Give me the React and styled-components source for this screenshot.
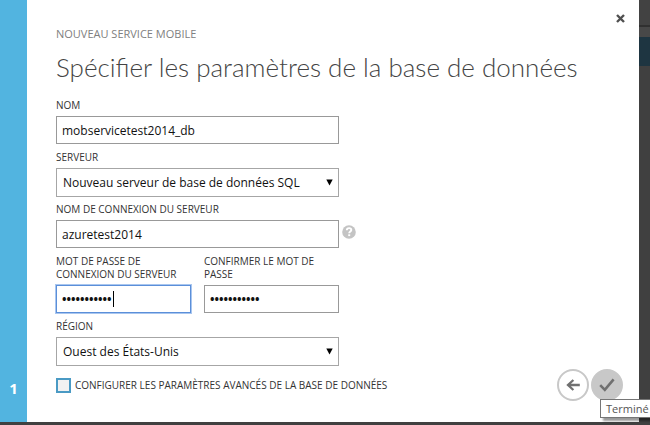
import React, { useState } from "react";
import styled, { createGlobalStyle } from "styled-components";

const GlobalStyle = createGlobalStyle`
  *, *::before, *::after {
    box-sizing: border-box;
  }

  body {
    margin: 0;
    background: #404040;
    font-family: "Open Sans", "Noto Sans", sans-serif;
    color: #333;
  }

  button, input, select {
    font-family: inherit;
    margin: 0;
  }
`;

const Page = styled.div`
  display: grid;
  grid-template-columns: 1fr 11px;
  min-height: 100vh;
  padding-bottom: 3px;
  overflow: hidden;
`;

const Dialog = styled.section`
  display: flex;
  background: #fff;
`;

const Behind = styled.div`
  display: flex;
  flex-direction: column;
`;

const BehindBand = styled.div`
  height: ${(props) => props.$height}px;
  background: ${(props) => props.$color};
`;

const StepRail = styled.aside`
  flex: 0 0 27px;
  display: flex;
  align-items: flex-end;
  justify-content: center;
  padding-bottom: 24px;
  background: #52b4e0;
  color: #fff;
  font-size: 15px;
  font-weight: 700;
  line-height: 20px;
`;

const Content = styled.form`
  flex: 1;
  display: flex;
  flex-direction: column;
  padding: 12px 12px 19px 29px;
`;

const Header = styled.header`
  display: flex;
  justify-content: space-between;
  align-items: flex-start;
`;

const Category = styled.p`
  margin: 14px 0 0;
  color: #808080;
  font-size: 11px;
  line-height: 16px;
`;

const CloseButton = styled.button`
  display: flex;
  padding: 2px;
  border: 0;
  background: none;
  color: #505050;
`;

const Title = styled.h1`
  margin: 7px 0 14px;
  color: #444;
  font-family: Lato, "Open Sans", sans-serif;
  font-size: 26px;
  font-weight: 300;
  line-height: 36px;
`;

const Fields = styled.div`
  display: flex;
  flex-direction: column;
  gap: 7px;
`;

const Field = styled.div`
  display: flex;
  flex-direction: column;
  gap: 4px;
`;

const Label = styled.label`
  font-size: 10px;
  line-height: 13px;
`;

const Row = styled.div`
  display: flex;
  gap: 3px;
`;

const Pair = styled.div`
  display: grid;
  grid-template-columns: 1fr 1fr;
  gap: 13px;
  max-width: 283px;
`;

const InputWrap = styled.div`
  position: relative;
  width: 100%;
  max-width: 283px;
`;

const Input = styled.input`
  display: block;
  width: 100%;
  height: 28px;
  padding: 0 5px;
  border: 1px solid #999;
  background: #fff;
  color: #111;
  font-size: 12px;
  outline: none;

  &[type="password"] {
    font-weight: 700;
  }

  &:focus {
    border-color: #5b8fd9;
    box-shadow: 0 0 0 1px #a9c6ef;
    caret-color: transparent;
  }
`;

const Caret = styled.span`
  position: absolute;
  top: 6px;
  left: 57px;
  width: 1px;
  height: 16px;
  background: #000;
`;

const Select = styled.select`
  display: block;
  width: 100%;
  height: 29px;
  margin-bottom: -1px;
  padding: 0 24px 0 6px;
  border: 1px solid #a6a6a6;
  border-radius: 0;
  background: #fff;
  color: #111;
  font-size: 12px;
  appearance: none;
`;

const SelectArrow = styled.svg`
  position: absolute;
  top: 11px;
  right: 6px;
  pointer-events: none;
`;

const HelpButton = styled.button`
  display: flex;
  align-self: flex-start;
  padding: 5px 0;
  border: 0;
  background: none;
`;

const Footer = styled.footer`
  display: flex;
  align-items: center;
  justify-content: space-between;
  margin-top: 4px;
`;

const CheckLabel = styled.label`
  display: flex;
  align-items: center;
  gap: 4px;
  font-size: 10px;
  line-height: 16px;
`;

const Checkbox = styled.input`
  width: 15px;
  height: 15px;
  border: 2px solid #4a9ac4;
  background: #f2f2f2;
  appearance: none;
`;

const Actions = styled.div`
  display: flex;
  gap: 2px;
  margin-right: 4px;
`;

const ActionWrap = styled.div`
  position: relative;
`;

const RoundButton = styled.button`
  display: flex;
  align-items: center;
  justify-content: center;
  width: 32px;
  height: 32px;
  padding: 0;
  border: 2px solid #c8c8c8;
  border-radius: 50%;
  background: ${(props) => (props.$filled ? "#c8c8c8" : "#fff")};
  color: #707070;
`;

const Tooltip = styled.span`
  position: absolute;
  top: 30px;
  left: 9px;
  padding: 0 5px;
  border: 1px solid #767676;
  background: #fff;
  box-shadow: 3px 3px 2px rgba(0, 0, 0, 0.4);
  color: #555;
  font-size: 11px;
  line-height: 17px;
`;

function TextField({ id, label, type = "text", defaultValue, help, focused }) {
  const [active, setActive] = useState(Boolean(focused));
  const [value, setValue] = useState(defaultValue);

  return (
    <Field>
      <Label htmlFor={id}>{label}</Label>
      <Row>
        <InputWrap>
          <Input
            id={id}
            type={type}
            value={value}
            autoFocus={focused}
            autoComplete="off"
            spellCheck={false}
            onChange={(e) => setValue(e.target.value)}
            onFocus={() => setActive(true)}
            onBlur={() => setActive(false)}
          />
          {focused && active && <Caret />}
        </InputWrap>
        {help && (
          <HelpButton type="button" aria-label="Aide">
            <svg width="14" height="14" viewBox="0 0 14 14" fill="none">
              <circle cx="7" cy="7" r="6.8" fill="#c4c4c4" />
              <path d="M4.8 5.2C4.8 3.8 5.8 3.1 7.1 3.1s2.2.7 2.2 1.8c0 1.5-2.1 1.6-2.1 3.3" stroke="#fff" strokeWidth="1.9" />
              <path d="M6.2 9.3h2v1.8h-2z" fill="#fff" />
            </svg>
          </HelpButton>
        )}
      </Row>
    </Field>
  );
}

function SelectField({ id, label, option }) {
  return (
    <Field>
      <Label htmlFor={id}>{label}</Label>
      <InputWrap>
        <Select id={id}>
          <option>{option}</option>
        </Select>
        <SelectArrow width="7" height="7" viewBox="0 0 7 7">
          <path d="M0.3 0.5h6.4L3.5 6.5z" fill="#000" />
        </SelectArrow>
      </InputWrap>
    </Field>
  );
}

function App() {
  return (
    <Page>
      <GlobalStyle />
      <Dialog>
        <StepRail>1</StepRail>
        <Content onSubmit={(e) => e.preventDefault()}>
          <Header>
            <Category>NOUVEAU SERVICE MOBILE</Category>
            <CloseButton type="button" aria-label="Fermer">
              <svg width="9" height="9" viewBox="0 0 9 9" fill="none" stroke="currentColor" strokeWidth="2.4">
                <path d="M1 1l7 7M8 1L1 8" />
              </svg>
            </CloseButton>
          </Header>
          <Title>Spécifier les paramètres de la base de données</Title>

          <Fields>
            <TextField id="name" label="NOM" defaultValue="mobservicetest2014_db" />
            <SelectField id="server" label="SERVEUR" option="Nouveau serveur de base de données SQL" />
            <TextField id="login" label="NOM DE CONNEXION DU SERVEUR" defaultValue="azuretest2014" help />
            <Pair>
              <TextField
                id="password"
                label="MOT DE PASSE DE CONNEXION DU SERVEUR"
                type="password"
                defaultValue="motdepasse1"
                focused
              />
              <TextField id="confirm" label="CONFIRMER LE MOT DE PASSE" type="password" defaultValue="motdepasse1" />
            </Pair>
            <SelectField id="region" label="RÉGION" option="Ouest des États-Unis" />
          </Fields>

          <Footer>
            <CheckLabel>
              <Checkbox type="checkbox" />
              CONFIGURER LES PARAMÈTRES AVANCÉS DE LA BASE DE DONNÉES
            </CheckLabel>
            <Actions>
              <RoundButton type="button" aria-label="Retour">
                <svg width="14" height="12" viewBox="0 0 14 12" fill="none" stroke="currentColor" strokeWidth="2.3">
                  <path d="M13.8 6H2M7.4 1L2 6l5.4 5" />
                </svg>
              </RoundButton>
              <ActionWrap>
                <RoundButton type="submit" aria-label="Terminé" $filled>
                  <svg width="16" height="14" viewBox="0 0 16 14" fill="none" stroke="currentColor" strokeWidth="2.6">
                    <path d="M1.2 7.2l4.6 4.6L14.6 1.4" />
                  </svg>
                </RoundButton>
                <Tooltip role="tooltip">Terminé</Tooltip>
              </ActionWrap>
            </Actions>
          </Footer>
        </Content>
      </Dialog>
      <Behind>
        <BehindBand $height={25} $color="#424242" />
        <BehindBand $height={2} $color="#303030" />
        <BehindBand $height={10} $color="#484848" />
        <BehindBand $height={29} $color="#1e3541" />
      </Behind>
    </Page>
  );
}

export default App;
